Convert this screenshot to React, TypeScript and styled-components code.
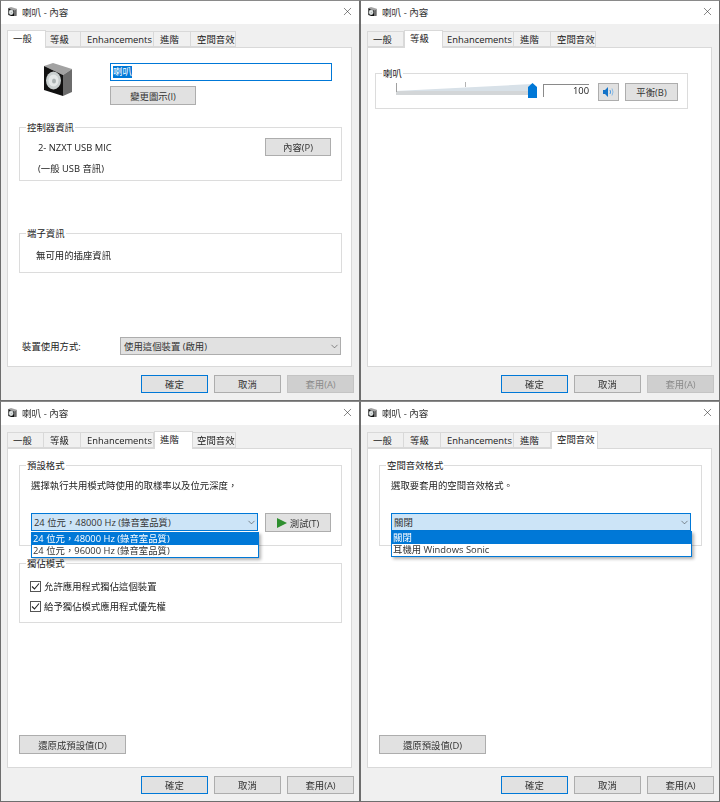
import React from 'react'
import styled, { createGlobalStyle } from 'styled-components'
import { ChevronDown, X } from 'lucide-react'

const Global = createGlobalStyle`
  html, body {
    margin: 0;
    background: #5a5a5a;
  }
  body {
    font-family: "Open Sans", "Noto Sans CJK TC", sans-serif;
    font-size: 9.4px;
    color: #222;
  }
`

const Screen = styled.div`
  display: grid;
  grid-template-columns: 360px 360px;
  grid-template-rows: 401px 401px;
  width: 720px;
  height: 802px;
  filter: blur(0.3px);
`

const Frame = styled.div`
  display: flex;
  flex-direction: column;
  box-sizing: border-box;
  border: 1px solid #6e6e6e;
  border-top-color: #8a8a8a;
  background: #f0f0f0;
`

const TitleBar = styled.div`
  display: flex;
  align-items: center;
  box-sizing: border-box;
  height: 23px;
  padding: 0 5px 2px 7px;
  gap: 5px;
  background: #fff;
  font-size: 9.6px;
  color: #333;
`

const Title = styled.span`
  flex: 1;
`

const TabStrip = styled.div`
  display: flex;
  align-items: flex-end;
  height: 23px;
  padding-left: 6px;
`

const Tab = styled.div<{ $w: number; $active: boolean }>`
  display: flex;
  align-items: center;
  box-sizing: border-box;
  position: relative;
  flex: none;
  width: ${p => p.$w + (p.$active ? 2 : 0)}px;
  height: ${p => (p.$active ? 18 : 16)}px;
  margin: ${p => (p.$active ? '0 -2px -1px 0' : '0')};
  padding: 0 0 ${p => (p.$active ? 3 : 0)}px ${p => (p.$active ? 5 : 6)}px;
  border: 1px solid #d9d9d9;
  border-left-width: ${p => (p.$active ? 1 : 0)}px;
  border-bottom-width: ${p => (p.$active ? 0 : 1)}px;
  background: ${p => (p.$active ? '#fff' : '#f0f0f0')};
  z-index: ${p => (p.$active ? 1 : 0)};
  white-space: nowrap;
  &:first-child {
    padding-left: 5px;
    border-left-width: 1px;
  }
`

const Panel = styled.div`
  display: flex;
  flex-direction: column;
  box-sizing: border-box;
  height: 320px;
  margin: 0 7px 0 6px;
  border: 1px solid #d9d9d9;
  background: #fff;
`

const Page = styled.div`
  display: flex;
  flex: 1;
  flex-direction: column;
  padding: 0 9px 11px 11px;
`

const LevelsPage = styled.div`
  padding: 25px 23px 0 7px;
`

const Footer = styled.div`
  display: flex;
  justify-content: flex-end;
  gap: 6px;
  padding: 8px 5px 0 0;
`

const Button = styled.button<{ $w: number; $h?: number; $default?: boolean }>`
  display: flex;
  justify-content: center;
  align-items: center;
  gap: 3px;
  box-sizing: border-box;
  flex: none;
  width: ${p => p.$w}px;
  height: ${p => p.$h ?? 18}px;
  padding: 0;
  border: ${p => (p.$default ? '1.5px solid #0078d7' : '1px solid #adadad')};
  border-radius: 0;
  background: #e1e1e1;
  font: inherit;
  color: #333;
  &:disabled {
    background: #cfcfcf;
    border-color: #c4c4c4;
    color: #8a8a8a;
  }
`

const Header = styled.div`
  display: flex;
  gap: 37px;
  padding: 15px 0 0 24px;
`

const HeaderFields = styled.div`
  display: flex;
  flex-direction: column;
  gap: 5px;
`

const NameInput = styled.div`
  display: flex;
  align-items: center;
  box-sizing: border-box;
  width: 222px;
  height: 18px;
  padding-left: 2px;
  border: 1px solid #0078d7;
`

const Selected = styled.span`
  background: #0078d7;
  color: #fff;
  line-height: 12px;
`

const Group = styled.div<{ $h: number; $top: number; $pad: string }>`
  position: relative;
  box-sizing: border-box;
  height: ${p => p.$h}px;
  margin-top: ${p => p.$top}px;
  padding: ${p => p.$pad};
  border: 1px solid #dcdcdc;
`

const GroupLabel = styled.span<{ $left?: number }>`
  position: absolute;
  top: -7px;
  left: ${p => p.$left ?? 6}px;
  padding: 0 1px;
  background: #fff;
  line-height: 13px;
`

const Line = styled.div`
  height: 18px;
  line-height: 20px;
`

const SpacedRow = styled.div`
  display: flex;
  justify-content: space-between;
  margin-bottom: 3px;
`

const UsageRow = styled.div`
  display: flex;
  justify-content: space-between;
  align-items: center;
  margin-top: auto;
  padding: 0 1px 0 3px;
`

const SelectWrap = styled.div<{ $w: number }>`
  position: relative;
  flex: none;
  width: ${p => p.$w}px;
`

const SelectBox = styled.div<{ $open?: boolean }>`
  display: flex;
  justify-content: space-between;
  align-items: center;
  box-sizing: border-box;
  height: 18px;
  padding: 0 0 0 ${p => (p.$open ? 2 : 3)}px;
  border: 1px solid ${p => (p.$open ? '#0078d7' : '#adadad')};
  background: ${p => (p.$open ? '#cce4f7' : '#e1e1e1')};
  color: #333;
`

const Menu = styled.div`
  position: absolute;
  top: 100%;
  left: 0;
  right: -1px;
  z-index: 2;
  border: 1px solid #0078d7;
  background: #fff;
  box-shadow: 2px 2px 3px rgba(0, 0, 0, 0.3);
`

const MenuItem = styled.div<{ $on?: boolean }>`
  height: 12px;
  padding-left: 1px;
  line-height: 12px;
  background: ${p => (p.$on ? '#0078d7' : '#fff')};
  color: ${p => (p.$on ? '#fff' : '#333')};
`

const FormatRow = styled.div`
  display: flex;
  gap: 7px;
  margin-top: 19px;
`

const CheckRow = styled.div`
  display: flex;
  align-items: center;
  gap: 3px;
  height: 20px;
`

const CheckBox = styled.span`
  display: flex;
  justify-content: center;
  align-items: center;
  box-sizing: border-box;
  width: 11px;
  height: 11px;
  border: 1px solid #555;
  background: #fff;
`

const RestoreRow = styled.div`
  margin-top: auto;
  padding-bottom: 2px;
`

const LevelRow = styled.div`
  display: flex;
  align-items: flex-start;
`

const LevelValue = styled.div`
  box-sizing: border-box;
  flex: none;
  width: 46px;
  height: 13px;
  margin: 2px 0 0 5px;
  border-top: 1px solid #8a8a8a;
  border-left: 1px solid #8a8a8a;
  text-align: right;
  line-height: 11px;
`

const MuteButton = styled(Button)`
  margin: 1px 6px 0 9px;
`

const BalanceButton = styled(Button)`
  margin-top: 1px;
`

const SpeakerBox = ({ size }: { size: number }) => (
  <svg width={size} height={size * 1.1} viewBox="0 0 30 33">
    <polygon points="1,3 10,0 29,6 20,12" fill="#a2a2a2" />
    <polygon points="1,3 20,12 20,33 1,27" fill="#111" />
    <polygon points="20,12 29,6 29,29 20,33" fill="#6c6c6c" />
    <ellipse cx="10.5" cy="17.5" rx="7.5" ry="9" fill="#c9cfcf" />
    <ellipse cx="10.5" cy="17.5" rx="5" ry="6" fill="#e4e8e8" />
    <ellipse cx="11" cy="18" rx="2" ry="2.5" fill="#aab2b2" />
  </svg>
)

const SliderArt = () => (
  <svg width="142" height="18" viewBox="0 0 142 18">
    <polygon points="0,9 136,2 136,9" fill="#d8e1e8" />
    <rect x="0" y="9" width="136" height="4" fill="#d3d6d8" />
    <line x1="0.5" y1="1" x2="0.5" y2="10" stroke="#a0a0a0" />
    <line x1="69.5" y1="0" x2="69.5" y2="5" stroke="#b4b4b4" />
    <path d="M132 5 L136.5 1 L141 5 V16 H132 Z" fill="#0078d7" />
  </svg>
)

const VolumeIcon = () => (
  <svg width="12" height="10" viewBox="0 0 12 10">
    <path d="M0 3 H2 L5 0 V10 L2 7 H0 Z" fill="#1473c8" />
    <path d="M7 3 Q8.2 5 7 7" fill="none" stroke="#4f9ade" />
    <path d="M9 1.5 Q11 5 9 8.5" fill="none" stroke="#86b9e6" />
  </svg>
)

const PlayIcon = () => (
  <svg width="10" height="10" viewBox="0 0 10 10">
    <path d="M0 0 L10 5 L0 10 Z" fill="#2f8f2f" />
  </svg>
)

const CheckMark = () => (
  <svg width="9" height="9" viewBox="0 0 9 9">
    <path d="M1 4.5 L3.5 7 L8 1.5" fill="none" stroke="#222" strokeWidth="1.1" />
  </svg>
)

const tabs = [
  { label: '一般', w: 37 },
  { label: '等級', w: 37 },
  { label: 'Enhancements', w: 73 },
  { label: '進階', w: 37 },
  { label: '空間音效', w: 45 },
]

function Dialog({ active, applyOff, children }: { active: number; applyOff?: boolean; children: React.ReactNode }) {
  return (
    <Frame>
      <TitleBar>
        <SpeakerBox size={9} />
        <Title>喇叭 - 內容</Title>
        <X size={13} strokeWidth={1} color="#222" />
      </TitleBar>
      <TabStrip>
        {tabs.map((t, i) => (
          <Tab key={t.label} $w={t.w} $active={i === active}>{t.label}</Tab>
        ))}
      </TabStrip>
      <Panel>{children}</Panel>
      <Footer>
        <Button $w={67} $default>確定</Button>
        <Button $w={67}>取消</Button>
        <Button $w={67} disabled={applyOff}>套用(A)</Button>
      </Footer>
    </Frame>
  )
}

function Select({ w, value, open, options }: { w: number; value: string; open?: boolean; options?: string[] }) {
  return (
    <SelectWrap $w={w}>
      <SelectBox $open={open}>
        {value}
        <ChevronDown size={11} strokeWidth={1.2} color="#333" />
      </SelectBox>
      {options && (
        <Menu>
          {options.map((o, i) => (
            <MenuItem key={o} $on={i === 0}>{o}</MenuItem>
          ))}
        </Menu>
      )}
    </SelectWrap>
  )
}

function Check({ label }: { label: string }) {
  return (
    <CheckRow>
      <CheckBox><CheckMark /></CheckBox>
      {label}
    </CheckRow>
  )
}

export default function App() {
  return (
    <Screen>
      <Global />

      <Dialog active={0} applyOff>
        <Page>
          <Header>
            <SpeakerBox size={30} />
            <HeaderFields>
              <NameInput><Selected>喇叭</Selected></NameInput>
              <Button $w={86} $h={19}>變更圖示(I)</Button>
            </HeaderFields>
          </Header>
          <Group $h={54} $top={22} $pad="10px 10px 0 18px">
            <GroupLabel>控制器資訊</GroupLabel>
            <SpacedRow>
              <Line>2- NZXT USB MIC</Line>
              <Button $w={66}>內容(P)</Button>
            </SpacedRow>
            <Line>(一般 USB 音訊)</Line>
          </Group>
          <Group $h={40} $top={52} $pad="12px 0 0 16px">
            <GroupLabel>端子資訊</GroupLabel>
            <Line>無可用的插座資訊</Line>
          </Group>
          <UsageRow>
            裝置使用方式:
            <Select w={221} value="使用這個裝置 (啟用)" />
          </UsageRow>
        </Page>
      </Dialog>

      <Dialog active={1} applyOff>
        <LevelsPage>
          <Group $h={36} $top={0} $pad="8px 0 0 20px">
            <GroupLabel>喇叭</GroupLabel>
            <LevelRow>
              <SliderArt />
              <LevelValue>100</LevelValue>
              <MuteButton $w={21}><VolumeIcon /></MuteButton>
              <BalanceButton $w={53}>平衡(B)</BalanceButton>
            </LevelRow>
          </Group>
        </LevelsPage>
      </Dialog>

      <Dialog active={3}>
        <Page>
          <Group $h={81} $top={16} $pad="10px 10px 0 11px">
            <GroupLabel>預設格式</GroupLabel>
            <Line>選擇執行共用模式時使用的取樣率以及位元深度，</Line>
            <FormatRow>
              <Select
                w={227}
                open
                value="24 位元，48000 Hz (錄音室品質)"
                options={['24 位元，48000 Hz (錄音室品質)', '24 位元，96000 Hz (錄音室品質)']}
              />
              <Button $w={66} $h={19}><PlayIcon />測試(T)</Button>
            </FormatRow>
          </Group>
          <Group $h={60} $top={17} $pad="12px 0 0 10px">
            <GroupLabel>獨佔模式</GroupLabel>
            <Check label="允許應用程式獨佔這個裝置" />
            <Check label="給予獨佔模式應用程式優先權" />
          </Group>
          <RestoreRow>
            <Button $w={107} $h={19}>還原成預設值(D)</Button>
          </RestoreRow>
        </Page>
      </Dialog>

      <Dialog active={4}>
        <Page>
          <Group $h={81} $top={16} $pad="10px 10px 0 11px">
            <GroupLabel>空間音效格式</GroupLabel>
            <Line>選取要套用的空間音效格式。</Line>
            <FormatRow>
              <Select w={300} open value="關閉" options={['關閉', '耳機用 Windows Sonic']} />
            </FormatRow>
          </Group>
          <RestoreRow>
            <Button $w={107} $h={19}>還原預設值(D)</Button>
          </RestoreRow>
        </Page>
      </Dialog>
    </Screen>
  )
}
